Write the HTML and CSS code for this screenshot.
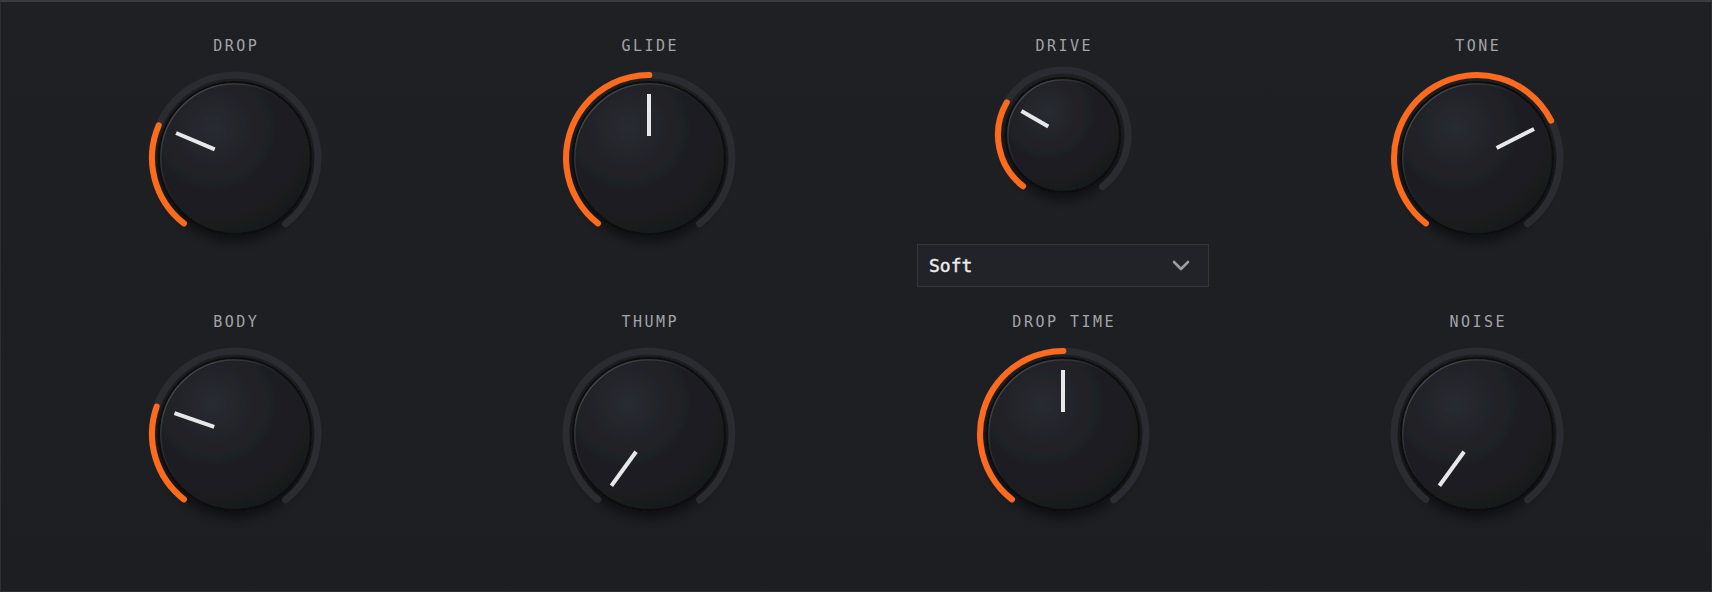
FILE: index.html
```html
<!DOCTYPE html>
<html>
<head>
<meta charset="utf-8">
<link rel="stylesheet" href="styles.css">
</head>
<body>
<svg class="defs" width="0" height="0">
  <defs>
    <radialGradient id="bodyg" cx="0.36" cy="0.3" r="0.8">
      <stop offset="0" stop-color="#292b31"/>
      <stop offset="0.45" stop-color="#1f2025"/>
      <stop offset="1" stop-color="#17181b"/>
    </radialGradient>
    <linearGradient id="hlg" x1="0" y1="0" x2="1" y2="1">
      <stop offset="0" stop-color="#5c5e65" stop-opacity="0.9"/>
      <stop offset="0.45" stop-color="#5c5e65" stop-opacity="0"/>
      <stop offset="1" stop-color="#5c5e65" stop-opacity="0"/>
    </linearGradient>
    <filter id="sh" x="-30%" y="-30%" width="160%" height="170%">
      <feDropShadow dx="0" dy="7" stdDeviation="6" flood-color="#000" flood-opacity="0.5"/>
    </filter>
  </defs>
</svg>
<div class="panel">
  <div class="cell">
    <div class="label">DROP</div>
    <svg class="knob knob-lg" viewBox="0 0 180 180" width="180" height="180">
      <circle class="body" cx="90" cy="90" r="76"/>
      <circle class="track" cx="90" cy="90" r="83" stroke-dasharray="411.4 1000" transform="rotate(128 90 90)"/>
      <circle class="value" cx="90" cy="90" r="83" stroke-dasharray="108.6 1000" transform="rotate(128 90 90)"/>
      <circle class="hl" cx="90" cy="90" r="74.2"/>
      <line class="ind" x1="90" y1="26" x2="90" y2="68" transform="rotate(-67 90 90)"/>
    </svg>
  </div>
  <div class="cell">
    <div class="label">GLIDE</div>
    <svg class="knob knob-lg" viewBox="0 0 180 180" width="180" height="180">
      <circle class="body" cx="90" cy="90" r="76"/>
      <circle class="track" cx="90" cy="90" r="83" stroke-dasharray="411.4 1000" transform="rotate(128 90 90)"/>
      <circle class="value" cx="90" cy="90" r="83" stroke-dasharray="205.7 1000" transform="rotate(128 90 90)"/>
      <circle class="hl" cx="90" cy="90" r="74.2"/>
      <line class="ind" x1="90" y1="26" x2="90" y2="68" transform="rotate(0 90 90)"/>
    </svg>
  </div>
  <div class="cell">
    <div class="label">DRIVE</div>
    <svg class="knob knob-sm" viewBox="0 0 140 140" width="140" height="140">
      <circle class="body" cx="70" cy="70" r="57"/>
      <circle class="track" cx="70" cy="70" r="65" stroke-dasharray="322.2 1000" transform="rotate(128 70 70)"/>
      <circle class="value" cx="70" cy="70" r="65" stroke-dasharray="93 1000" transform="rotate(128 70 70)"/>
      <circle class="hl" cx="70" cy="70" r="55.2"/>
      <line class="ind" x1="70" y1="22" x2="70" y2="53" transform="rotate(-60 70 70)"/>
    </svg>
    <div class="select">
      <span class="select-text">Soft</span>
      <svg class="chev" viewBox="0 0 18 11" width="18" height="11"><path d="M2 2 L9 9 L16 2"/></svg>
    </div>
  </div>
  <div class="cell">
    <div class="label">TONE</div>
    <svg class="knob knob-lg" viewBox="0 0 180 180" width="180" height="180">
      <circle class="body" cx="90" cy="90" r="76"/>
      <circle class="track" cx="90" cy="90" r="83" stroke-dasharray="411.4 1000" transform="rotate(128 90 90)"/>
      <circle class="value" cx="90" cy="90" r="83" stroke-dasharray="296.9 1000" transform="rotate(128 90 90)"/>
      <circle class="hl" cx="90" cy="90" r="74.2"/>
      <line class="ind" x1="90" y1="26" x2="90" y2="68" transform="rotate(63 90 90)"/>
    </svg>
  </div>

  <div class="cell">
    <div class="label">BODY</div>
    <svg class="knob knob-lg" viewBox="0 0 180 180" width="180" height="180">
      <circle class="body" cx="90" cy="90" r="76"/>
      <circle class="track" cx="90" cy="90" r="83" stroke-dasharray="411.4 1000" transform="rotate(128 90 90)"/>
      <circle class="value" cx="90" cy="90" r="83" stroke-dasharray="102.9 1000" transform="rotate(128 90 90)"/>
      <circle class="hl" cx="90" cy="90" r="74.2"/>
      <line class="ind" x1="90" y1="26" x2="90" y2="68" transform="rotate(-71 90 90)"/>
    </svg>
  </div>
  <div class="cell">
    <div class="label">THUMP</div>
    <svg class="knob knob-lg" viewBox="0 0 180 180" width="180" height="180">
      <circle class="body" cx="90" cy="90" r="76"/>
      <circle class="track" cx="90" cy="90" r="83" stroke-dasharray="411.4 1000" transform="rotate(128 90 90)"/>
      <circle class="hl" cx="90" cy="90" r="74.2"/>
      <line class="ind" x1="90" y1="26" x2="90" y2="68" transform="rotate(-144 90 90)"/>
    </svg>
  </div>
  <div class="cell">
    <div class="label">DROP TIME</div>
    <svg class="knob knob-lg" viewBox="0 0 180 180" width="180" height="180">
      <circle class="body" cx="90" cy="90" r="76"/>
      <circle class="track" cx="90" cy="90" r="83" stroke-dasharray="411.4 1000" transform="rotate(128 90 90)"/>
      <circle class="value" cx="90" cy="90" r="83" stroke-dasharray="205.7 1000" transform="rotate(128 90 90)"/>
      <circle class="hl" cx="90" cy="90" r="74.2"/>
      <line class="ind" x1="90" y1="26" x2="90" y2="68" transform="rotate(0 90 90)"/>
    </svg>
  </div>
  <div class="cell">
    <div class="label">NOISE</div>
    <svg class="knob knob-lg" viewBox="0 0 180 180" width="180" height="180">
      <circle class="body" cx="90" cy="90" r="76"/>
      <circle class="track" cx="90" cy="90" r="83" stroke-dasharray="411.4 1000" transform="rotate(128 90 90)"/>
      <circle class="hl" cx="90" cy="90" r="74.2"/>
      <line class="ind" x1="90" y1="26" x2="90" y2="68" transform="rotate(-144 90 90)"/>
    </svg>
  </div>
</div>
</body>
</html>
```

FILE: styles.css
```css
html, body {
  margin: 0;
  padding: 0;
  background: #1e1f23;
}

.defs {
  position: absolute;
  width: 0;
  height: 0;
}

.panel {
  width: 1712px;
  height: 592px;
  box-sizing: border-box;
  border: 1px solid #2e2f34;
  border-top: 2px solid #3a3b40;
  padding: 36px 27px 0;
  display: grid;
  grid-template-columns: repeat(4, 414px);
  row-gap: 27px;
  align-items: start;
  align-content: start;
  background: linear-gradient(180deg, #1f2024 0%, #1d1e22 100%);
}

.cell {
  display: flex;
  flex-direction: column;
  align-items: center;
}

.label {
  font-family: "DejaVu Sans Mono", "Liberation Mono", monospace;
  font-size: 15px;
  line-height: 16px;
  letter-spacing: 2.5px;
  padding-left: 2.5px;
  color: #a3a4aa;
}

.knob {
  display: block;
  overflow: visible;
}

.knob-lg {
  margin-top: 14px;
}

.knob-sm {
  margin-top: 11px;
}

.track {
  fill: none;
  stroke: #2b2c31;
  stroke-width: 7;
  stroke-linecap: round;
}

.value {
  fill: none;
  stroke: #ff6a1c;
  stroke-width: 6;
  stroke-linecap: round;
}

.body {
  fill: url(#bodyg);
  stroke: #0c0d0f;
  stroke-width: 2;
  filter: url(#sh);
}

.hl {
  fill: none;
  stroke: url(#hlg);
  stroke-width: 1.3;
}

.ind {
  stroke: #e8e8ea;
  stroke-width: 4;
}

.select {
  margin-top: 39px;
  width: 292px;
  height: 43px;
  box-sizing: border-box;
  border: 1px solid #34353a;
  background: #222328;
  display: flex;
  align-items: center;
  justify-content: space-between;
  padding: 0 18px 0 11px;
}

.select-text {
  font-family: "DejaVu Sans Mono", "Liberation Mono", monospace;
  font-size: 18px;
  font-weight: normal;
  -webkit-text-stroke: 0.4px #ececee;
  color: #ececee;
}

.chev {
  display: block;
}

.chev path {
  fill: none;
  stroke: #9c9da2;
  stroke-width: 2.6;
  stroke-linecap: round;
  stroke-linejoin: round;
}
```
